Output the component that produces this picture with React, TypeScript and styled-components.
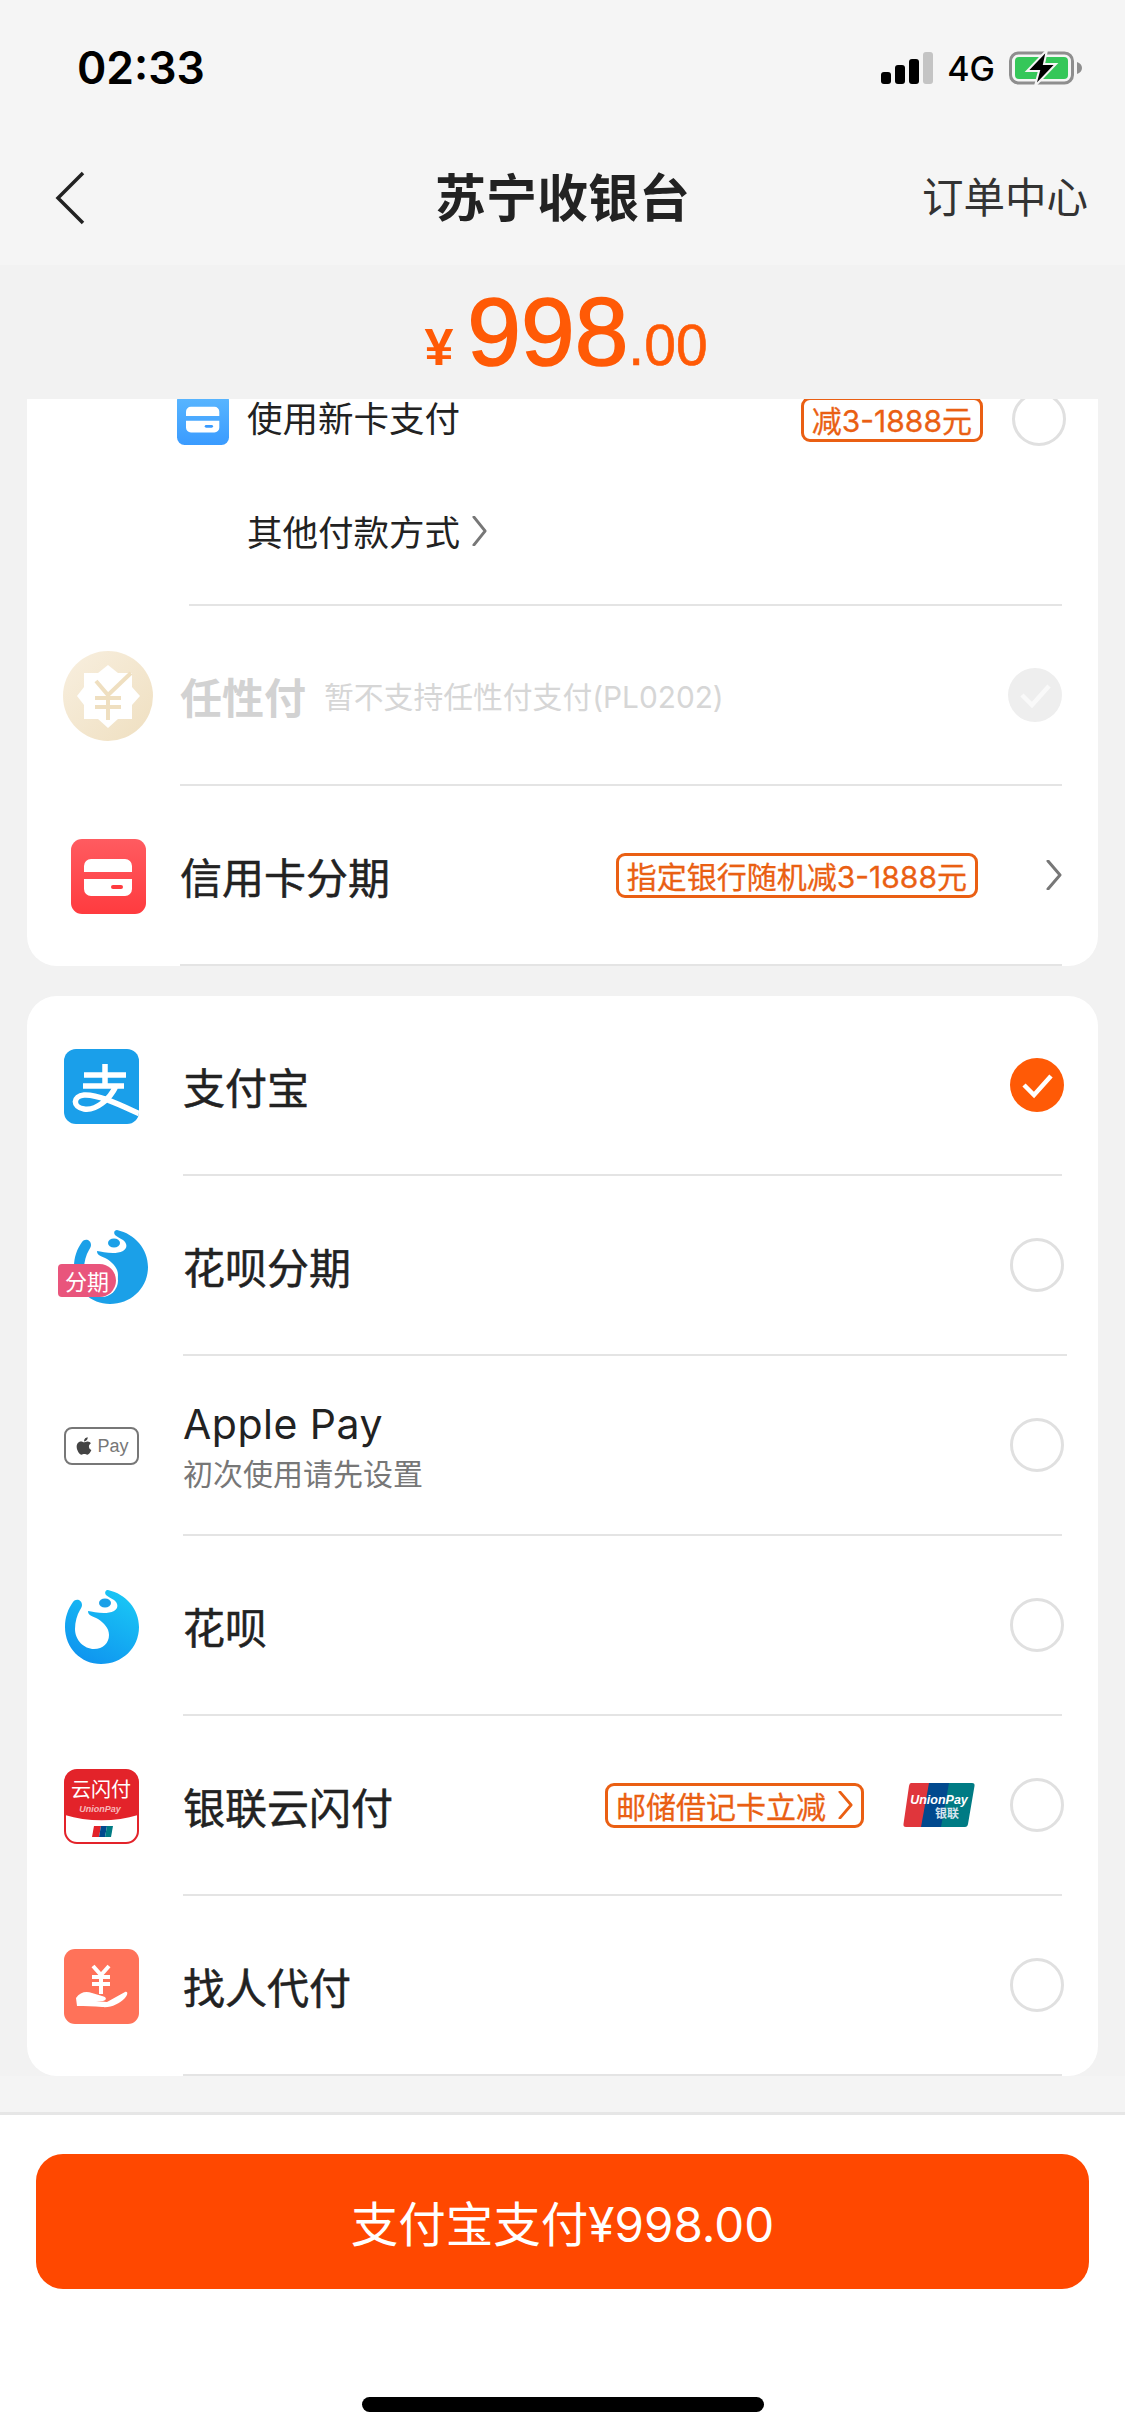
import React from 'react';
import styled, { createGlobalStyle } from 'styled-components';
import { FaApple } from 'react-icons/fa';

const GlobalStyle = createGlobalStyle`
  html, body {
    margin: 0;
    padding: 0;
    background: #fff;
  }
  * {
    box-sizing: border-box;
  }
`;

const CJK = `Inter, "Noto Sans CJK SC", sans-serif`;
const ARIAL = `"Liberation Sans", "Noto Sans CJK SC", sans-serif`;

const Page = styled.div`
  width: 1125px;
  height: 2436px;
  display: flex;
  flex-direction: column;
  overflow: hidden;
  font-family: ${CJK};
  color: #222;
`;

const Top = styled.header`
  height: 265px;
  background: #f5f5f5;
`;

const StatusBar = styled.div`
  height: 136px;
  padding: 0 43px 0 77px;
  display: flex;
  align-items: center;
  justify-content: space-between;
`;

const Time = styled.span`
  font-size: 44.5px;
  font-weight: 600;
  color: #000;
`;

const StatusIcons = styled.div`
  display: flex;
  align-items: center;
  gap: 14px;
`;

const Network = styled.span`
  font-size: 34px;
  font-weight: 500;
  color: #000;
`;

const Nav = styled.nav`
  height: 129px;
  padding: 0 37px 12px;
  display: grid;
  grid-template-columns: 1fr auto 1fr;
  align-items: center;
`;

const BackSlot = styled.span`
  margin: 6px 0 0 18px;
  display: flex;
`;

const Title = styled.h1`
  margin: 0;
  font-size: 51px;
  font-weight: 700;
  color: #222;
`;

const NavLink = styled.span`
  justify-self: end;
  font-size: 41.5px;
  font-weight: 400;
  color: #333;
`;

const AmountBar = styled.div`
  height: 134px;
  background: #f2f2f2;
  display: flex;
  justify-content: center;
  align-items: baseline;
  padding: 12px 0 0 7px;
  font-family: ${ARIAL};
  color: #ff5a06;
`;

const Currency = styled.span`
  font-size: 52px;
  font-weight: 700;
  margin-right: 14px;
`;

const Whole = styled.span`
  font-size: 96.5px;
  -webkit-text-stroke: 1.6px #ff5a06;
`;

const Cents = styled.span`
  font-size: 57px;
  -webkit-text-stroke: 0.6px #ff5a06;
`;

const ListArea = styled.main`
  height: 1677px;
  background: #f2f2f2;
  padding: 0 27px;
  display: flex;
  flex-direction: column;
  gap: 30px;
`;

const Strip = styled.div`
  height: 36px;
  background: #f4f4f4;
`;

const Card = styled.section<{ $clipped?: boolean }>`
  flex: none;
  background: #fff;
  border-radius: ${(p) => (p.$clipped ? '0 0 30px 30px' : '30px')};
  overflow: hidden;
`;

const NewCardRow = styled.div`
  height: 54px;
  margin-top: -7px;
  padding: 0 34px 0 150px;
  display: flex;
  align-items: center;
`;

const SmallLabel = styled.span`
  font-size: 35.5px;
  color: #222;
`;

const NewCardLabel = styled(SmallLabel)`
  margin: 0 0 5px 18px;
`;

const OtherRow = styled.div`
  height: 160px;
  margin: 0 36px 0 162px;
  padding: 11px 0 0 58px;
  display: flex;
  align-items: center;
  gap: 12px;
  border-bottom: 2px solid #e4e4e4;
`;

const Row = styled.div`
  height: 180px;
  display: flex;
`;

const IconSlot = styled.div<{ $width: number; $inset: number }>`
  flex: none;
  width: ${(p) => p.$width}px;
  padding-left: ${(p) => p.$inset}px;
  display: flex;
  align-items: center;
`;

const Body = styled.div<{ $wide?: boolean }>`
  flex: 1;
  min-width: 0;
  margin-right: ${(p) => (p.$wide ? 31 : 36)}px;
  padding-right: ${(p) => (p.$wide ? 5 : 0)}px;
  display: flex;
  align-items: center;
  border-bottom: 2px solid #e4e4e4;
`;

const Label = styled.span<{ $muted?: boolean }>`
  font-size: 42px;
  font-weight: ${(p) => (p.$muted ? 700 : 400)};
  color: ${(p) => (p.$muted ? '#d2d2d2' : '#222')};
  -webkit-text-stroke: ${(p) => (p.$muted ? 0 : '0.5px #222')};
`;

const Hint = styled.span`
  font-size: 29.8px;
  margin-left: 18px;
  color: #d6d6d6;
`;

const Stack = styled.div`
  display: flex;
  flex-direction: column;
  gap: 6px;
`;

const Sub = styled.span`
  font-size: 30px;
  line-height: 36px;
  color: #777;
`;

const AppleLabel = styled.span`
  font-size: 41px;
  line-height: 52px;
  letter-spacing: 0.5px;
  color: #222;
`;

const Tag = styled.span<{ $after: number }>`
  margin-left: auto;
  margin-right: ${(p) => p.$after}px;
  height: 45px;
  padding: 0 8px;
  display: inline-flex;
  align-items: center;
  gap: 12px;
  border: 3px solid #ea5f13;
  border-radius: 9px;
  font-size: 30px;
  white-space: nowrap;
  color: #ea5f13;
  -webkit-text-stroke: 0.3px #ea5f13;
`;

const Radio = styled.span`
  flex: none;
  width: 54px;
  height: 54px;
  margin-right: -2px;
  border: 3px solid #e0e0e0;
  border-radius: 50%;
`;

const Trailing = styled.span<{ $flush?: boolean }>`
  margin-left: auto;
  margin-right: ${(p) => (p.$flush ? 0 : -2)}px;
  display: flex;
`;

const PlainRadio = styled(Radio)`
  margin-right: 0;
`;

const PayLogo = styled.span`
  flex: none;
  margin-right: 35px;
  display: flex;
`;

const AppleBadge = styled.span`
  width: 75px;
  height: 38px;
  border: 2px solid #777;
  border-radius: 8px;
  display: flex;
  align-items: center;
  justify-content: center;
  gap: 3px;
  color: #444;
  font-family: ${ARIAL};
  font-size: 18px;
`;

const BadgeText = styled.span`
  color: #777;
`;

const HuabeiWrap = styled.span`
  position: relative;
  display: flex;
  margin-left: 9px;
`;

const InstallmentBadge = styled.span`
  position: absolute;
  left: -15px;
  bottom: 7px;
  width: 58px;
  height: 33px;
  background: #e9557c;
  border-radius: 4px 17px 17px 4px;
  box-shadow: 2px 0 0 #fff;
  display: flex;
  align-items: center;
  justify-content: center;
  color: #fff;
  font-size: 22px;
`;

const Footer = styled.footer`
  flex: 1;
  background: #fff;
  border-top: 3px solid #e6e6e6;
  padding: 39px 36px 0;
  display: flex;
  flex-direction: column;
  align-items: center;
`;

const PayButton = styled.button`
  width: 100%;
  height: 135px;
  border: 0;
  border-radius: 27px;
  background: #ff4800;
  color: #fff;
  font-family: ${CJK};
  font-size: 47.5px;
`;

const HomeBar = styled.span`
  width: 402px;
  height: 15px;
  margin-top: 108px;
  border-radius: 8px;
  background: #000;
`;

const Chevron = ({ w = 16, h = 30, color = '#777', sw = 3 }: { w?: number; h?: number; color?: string; sw?: number }) => (
  <svg width={w} height={h} viewBox="0 0 16 30" preserveAspectRatio="none" fill="none">
    <path d="M2 1 L14 15 L2 29" stroke={color} strokeWidth={sw} strokeLinecap="round" strokeLinejoin="round" />
  </svg>
);

const BackArrow = () => (
  <svg width="30" height="54" viewBox="0 0 30 54" fill="none">
    <path d="M28 2 L3 27 L28 52" stroke="#222" strokeWidth="3.5" />
  </svg>
);

const Signal = () => (
  <svg width="52" height="32" viewBox="0 0 52 32">
    <rect x="0" y="20" width="10" height="12" rx="3" fill="#000" />
    <rect x="14" y="13" width="10" height="19" rx="3" fill="#000" />
    <rect x="28" y="7" width="10" height="25" rx="3" fill="#000" />
    <rect x="42" y="0" width="10" height="32" rx="3" fill="#c4c4c4" />
  </svg>
);

const Battery = () => (
  <svg width="73" height="36" viewBox="0 0 73 36">
    <rect x="1.5" y="3" width="62" height="30" rx="8" fill="none" stroke="#8e8e8e" strokeWidth="3" />
    <rect x="6" y="7" width="53" height="22" rx="4" fill="#35c759" />
    <path d="M68 12 C71 13 73 15 73 18 C73 21 71 23 68 24 Z" fill="#8e8e8e" />
    <path d="M38 0 L18 21 L30 21 L26 36 L47 14 L35 14 Z" fill="#000" stroke="#f5f5f5" strokeWidth="2" />
  </svg>
);

const CardIcon = ({ size, from, to, id }: { size: number; from: string; to: string; id: string }) => (
  <svg width={size} height={size} viewBox="0 0 75 75">
    <defs>
      <linearGradient id={id} x1="0" y1="0" x2="0" y2="1">
        <stop offset="0" stopColor={from} />
        <stop offset="1" stopColor={to} />
      </linearGradient>
    </defs>
    <rect width="75" height="75" rx="11" fill={`url(#${id})`} />
    <path d="M13 33 V27 a7 7 0 0 1 7 -7 H54 a7 7 0 0 1 7 7 V33 Z M13 40 H61 V50 a7 7 0 0 1 -7 7 H20 a7 7 0 0 1 -7 -7 Z" fill="#fff" />
    <rect x="40" y="46" width="12" height="4" rx="2" fill={to} />
  </svg>
);

const RenxingIcon = () => (
  <svg width="90" height="90" viewBox="0 0 90 90">
    <defs>
      <linearGradient id="gold" x1="0" y1="0" x2="1" y2="1">
        <stop offset="0" stopColor="#f8efdf" />
        <stop offset="1" stopColor="#efdfc0" />
      </linearGradient>
    </defs>
    <circle cx="45" cy="45" r="45" fill="url(#gold)" />
    <path d="M45 14 L55 22 L69 22 L69 36 L77 45 L69 54 L69 68 L55 68 L45 77 L35 68 L21 68 L21 54 L14 45 L21 36 L21 22 L35 22 Z" fill="#fff" />
    <path d="M33 30 L45 44 L68 22 M32 47 H58 M32 56 H58 M45 44 V69" fill="none" stroke="#efdfc0" strokeWidth="4" />
  </svg>
);

const AlipayIcon = () => (
  <svg width="75" height="75" viewBox="0 0 75 75">
    <defs>
      <clipPath id="alipay-clip">
        <rect width="75" height="75" rx="12" />
      </clipPath>
    </defs>
    <g clipPath="url(#alipay-clip)">
      <rect width="75" height="75" fill="#1a9fea" />
      <path
        d="M20 26 H62 M19 37 H60 M41 15 V37 M52 37 C46 50 32 62 20 60 C8 58 9 47 20 46 C34 45 56 56 78 66"
        fill="none"
        stroke="#fff"
        strokeWidth="5.5"
      />
    </g>
  </svg>
);

const HuabeiIcon = ({ id, flat }: { id: string; flat?: boolean }) => (
  <svg width="75" height="75" viewBox="0 0 75 75">
    <defs>
      <linearGradient id={id} x1="0.8" y1="0.1" x2="0.3" y2="1">
        <stop offset="0" stopColor={flat ? '#1ba0e8' : '#19c4f5'} />
        <stop offset="1" stopColor={flat ? '#1ba0e8' : '#0f94ef'} />
      </linearGradient>
    </defs>
    {/* ring with the gap at the top left, then the arm running over the head */}
    <path
      d="M44 1 C62 5 75 20 75 38 C75 59 58 75 37 75 C17 75 1 59 1 38 C1 28 4 20 9 13 C12 9 18 11 18 16 C18 18 17 19 16 21 C13 26 11 33 11 40 C11 51 20 60 30 60 C39 60 45 54 45 46 C45 39 40 34 34 30 C29 27 24 27 24 22 C30 23 42 26 50 22 C55 19 54 14 50 11 C47 9 44 8 42 6 C40 3 42 1 44 1 Z"
      fill={`url(#${id})`}
    />
    <ellipse cx="41" cy="14" rx="6" ry="4.5" fill="#1ba0e8" />
  </svg>
);

const YunshanIcon = () => (
  <svg width="75" height="75" viewBox="0 0 75 75">
    <rect x="1" y="1" width="73" height="73" rx="12" fill="#fff" stroke="#e3232a" strokeWidth="2" />
    <path d="M1 13 a12 12 0 0 1 12 -12 H62 a12 12 0 0 1 12 12 V46 C52 53 23 53 1 46 Z" fill="#e3232a" />
    <text x="37" y="28" textAnchor="middle" fontSize="20" fill="#fff" fontFamily={CJK}>云闪付</text>
    <text x="36" y="43" textAnchor="middle" fontSize="9" fontStyle="italic" fontWeight="700" fill="#f6b9bb" fontFamily={ARIAL}>UnionPay</text>
    <path d="M30 57 H37 L35 68 H28 Z" fill="#e3232a" />
    <path d="M37 57 H43 L41 68 H35 Z" fill="#01498e" />
    <path d="M43 57 H49 L47 68 H41 Z" fill="#007b84" />
  </svg>
);

const HelperIcon = () => (
  <svg width="75" height="75" viewBox="0 0 75 75">
    <rect width="75" height="75" rx="11" fill="#ff7259" />
    <path d="M29 17 L37 26 L45 17 M28 28 H46 M28 35 H46 M37 26 V45" fill="none" stroke="#fff" strokeWidth="4" />
    <path
      d="M12 49 C16 43 22 42 28 44 L38 47 C43 48 43 51 39 52 L32 52 L43 53 L61 43 C65 42 63 47 61 49 C55 55 47 59 38 58 C30 57 21 57 13 57 Z"
      fill="#fff"
    />
  </svg>
);

const UnionPayLogo = () => (
  <svg width="72" height="44" viewBox="0 0 72 44">
    <path d="M8 0 H30 L22 44 H3 Q0 44 0.5 41 L6 3 Q6.5 0 8 0 Z" fill="#e0363c" />
    <path d="M26 0 H50 L42 44 H18 Z" fill="#01498e" />
    <path d="M46 0 H69 Q72 0 71.5 3 L65 41 Q64.5 44 62 44 H38 Z" fill="#007b84" />
    <text x="36" y="21" textAnchor="middle" fontSize="12.5" fontWeight="700" fontStyle="italic" fill="#fff" fontFamily={ARIAL}>UnionPay</text>
    <text x="44" y="35" textAnchor="middle" fontSize="12" fontWeight="700" fill="#d6e4ee" fontFamily={CJK}>银联</text>
  </svg>
);

const CheckDot = ({ fill, tick }: { fill: string; tick: string }) => (
  <svg width="54" height="54" viewBox="0 0 54 54">
    <circle cx="27" cy="27" r="27" fill={fill} />
    <path d="M14 27 L24 37 L41 18" fill="none" stroke={tick} strokeWidth="4.5" />
  </svg>
);

export default function App() {
  return (
    <Page>
      <GlobalStyle />
      <Top>
        <StatusBar>
          <Time>02:33</Time>
          <StatusIcons>
            <Signal />
            <Network>4G</Network>
            <Battery />
          </StatusIcons>
        </StatusBar>
        <Nav>
          <BackSlot>
            <BackArrow />
          </BackSlot>
          <Title>苏宁收银台</Title>
          <NavLink>订单中心</NavLink>
        </Nav>
      </Top>

      <AmountBar>
        <Currency>¥</Currency>
        <Whole>998</Whole>
        <Cents>.00</Cents>
      </AmountBar>

      <ListArea>
        <Card $clipped>
          <NewCardRow>
            <CardIcon size={52} from="#5bb8ff" to="#3a9bff" id="blue-card" />
            <NewCardLabel>使用新卡支付</NewCardLabel>
            <Tag $after={29}>减3-1888元</Tag>
            <Radio />
          </NewCardRow>
          <OtherRow>
            <SmallLabel>其他付款方式</SmallLabel>
            <Chevron w={15} h={30} />
          </OtherRow>
          <Row>
            <IconSlot $width={153} $inset={36}>
              <RenxingIcon />
            </IconSlot>
            <Body>
              <Label $muted>任性付</Label>
              <Hint>暂不支持任性付支付(PL0202)</Hint>
              <Trailing $flush>
                <CheckDot fill="#eeeeee" tick="#f9f9f9" />
              </Trailing>
            </Body>
          </Row>
          <Row>
            <IconSlot $width={153} $inset={44}>
              <CardIcon size={75} from="#ff5b60" to="#ff3b3f" id="red-card" />
            </IconSlot>
            <Body>
              <Label>信用卡分期</Label>
              <Tag $after={68}>指定银行随机减3-1888元</Tag>
              <Chevron w={16} h={30} />
            </Body>
          </Row>
        </Card>

        <Card>
          <Row>
            <IconSlot $width={156} $inset={37}>
              <AlipayIcon />
            </IconSlot>
            <Body>
              <Label>支付宝</Label>
              <Trailing>
                <CheckDot fill="#ff5a06" tick="#fff" />
              </Trailing>
            </Body>
          </Row>
          <Row>
            <IconSlot $width={156} $inset={37}>
              <HuabeiWrap>
                <HuabeiIcon id="huabei-flat" flat />
                <InstallmentBadge>分期</InstallmentBadge>
              </HuabeiWrap>
            </IconSlot>
            <Body $wide>
              <Label>花呗分期</Label>
              <Trailing>
                <PlainRadio />
              </Trailing>
            </Body>
          </Row>
          <Row>
            <IconSlot $width={156} $inset={37}>
              <AppleBadge>
                <FaApple size={20} />
                <BadgeText>Pay</BadgeText>
              </AppleBadge>
            </IconSlot>
            <Body>
              <Stack>
                <AppleLabel>Apple Pay</AppleLabel>
                <Sub>初次使用请先设置</Sub>
              </Stack>
              <Trailing>
                <PlainRadio />
              </Trailing>
            </Body>
          </Row>
          <Row>
            <IconSlot $width={156} $inset={37}>
              <HuabeiIcon id="huabei" />
            </IconSlot>
            <Body>
              <Label>花呗</Label>
              <Trailing>
                <PlainRadio />
              </Trailing>
            </Body>
          </Row>
          <Row>
            <IconSlot $width={156} $inset={37}>
              <YunshanIcon />
            </IconSlot>
            <Body>
              <Label>银联云闪付</Label>
              <Tag $after={39}>
                <span>邮储借记卡立减</span>
                <Chevron w={15} h={28} color="#ea5f13" sw={3} />
              </Tag>
              <PayLogo>
                <UnionPayLogo />
              </PayLogo>
              <Radio />
            </Body>
          </Row>
          <Row>
            <IconSlot $width={156} $inset={37}>
              <HelperIcon />
            </IconSlot>
            <Body>
              <Label>找人代付</Label>
              <Trailing>
                <PlainRadio />
              </Trailing>
            </Body>
          </Row>
        </Card>
      </ListArea>
      <Strip />

      <Footer>
        <PayButton>支付宝支付¥998.00</PayButton>
        <HomeBar />
      </Footer>
    </Page>
  );
}
